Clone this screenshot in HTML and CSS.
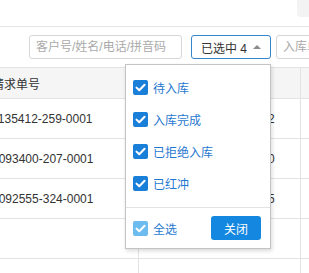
FILE: index.html
```html
<!DOCTYPE html>
<html lang="zh">
<head>
  <meta charset="UTF-8" />
  <title>入库请求</title>
  <link rel="stylesheet" href="styles.css">
</head>
<body>
  <div class="topbar">
    <div class="tab"></div>
  </div>

  <div class="toolbar">
    <input type="text" class="search" placeholder="客户号/姓名/电话/拼音码" />

    <div class="select-wrap">
      <div class="select">
        <span>已选中 4</span>
        <span class="arrow"></span>
      </div>

      <div class="panel">
        <div class="list">
          <label class="option"><span class="box"><svg viewBox="0 0 15 15"><path d="M3.5 7.6 L6.3 10.3 L11.6 4.8" /></svg></span>待入库</label>
          <label class="option"><span class="box"><svg viewBox="0 0 15 15"><path d="M3.5 7.6 L6.3 10.3 L11.6 4.8" /></svg></span>入库完成</label>
          <label class="option"><span class="box"><svg viewBox="0 0 15 15"><path d="M3.5 7.6 L6.3 10.3 L11.6 4.8" /></svg></span>已拒绝入库</label>
          <label class="option"><span class="box"><svg viewBox="0 0 15 15"><path d="M3.5 7.6 L6.3 10.3 L11.6 4.8" /></svg></span>已红冲</label>
        </div>
        <div class="panel-footer">
          <label class="option all"><span class="box"><svg viewBox="0 0 15 15"><path d="M3.5 7.6 L6.3 10.3 L11.6 4.8" /></svg></span>全选</label>
          <button type="button" class="close">关闭</button>
        </div>
      </div>
    </div>

    <input type="text" class="search short" placeholder="入库单号" />
  </div>

  <div class="grid">
    <div class="row head">
      <div class="cell">请求单号</div>
      <div class="cell mid">请求时间</div>
      <div class="cell"></div>
    </div>
    <div class="row">
      <div class="cell">1135412-259-0001</div>
      <div class="cell mid">2023-11-01 13:54:12</div>
      <div class="cell"></div>
    </div>
    <div class="row">
      <div class="cell">1093400-207-0001</div>
      <div class="cell mid">2023-11-01 09:34:00</div>
      <div class="cell"></div>
    </div>
    <div class="row">
      <div class="cell">1092555-324-0001</div>
      <div class="cell mid">2023-11-01 09:25:55</div>
      <div class="cell"></div>
    </div>
    <div class="row">
      <div class="cell"></div>
      <div class="cell"></div>
      <div class="cell"></div>
    </div>
    <div class="row">
      <div class="cell"></div>
      <div class="cell"></div>
      <div class="cell"></div>
    </div>
  </div>
</body>
</html>
```

FILE: styles.css
```css
* {
  margin: 0;
  padding: 0;
  box-sizing: border-box;
  font-family: 'Liberation Sans', 'Noto Sans CJK SC', sans-serif;
}

body {
  width: 309px;
  height: 273px;
  overflow: hidden;
  background-color: white;
  color: #333;
  font-size: 12px;
}

.topbar {
  height: 27px;
  border-bottom: 1px solid #e6e6e6;
  display: flex;
  justify-content: flex-end;
}

.tab {
  width: 12px;
  height: 17px;
  background-color: #f3f3f3;
  border-bottom-left-radius: 4px;
}

.toolbar {
  display: flex;
  align-items: center;
  padding: 8px 0 8px 29px;
}

.search {
  flex-shrink: 0;
  width: 153px;
  height: 24px;
  padding: 0 6px;
  border: 1px solid #d6d6d6;
  border-radius: 3px;
  font-size: 12px;
  color: #333;
}

.search::placeholder {
  color: #aaa;
}

.search.short {
  width: 80px;
  margin-left: 5px;
}

.select-wrap {
  position: relative;
  flex-shrink: 0;
  margin-left: 9px;
}

.select {
  width: 80px;
  height: 24px;
  padding: 0 6px 0 9px;
  border: 1px solid #3585cf;
  border-radius: 3px;
  display: flex;
  align-items: center;
  justify-content: space-between;
}

.arrow {
  width: 0;
  height: 0;
  border-left: 4px solid transparent;
  border-right: 4px solid transparent;
  border-bottom: 4px solid #8c8c8c;
  margin-right: 3px;
}

.panel {
  position: absolute;
  top: 29px;
  right: 0;
  width: 146px;
  background-color: white;
  border: 1px solid #c4c4c4;
  box-shadow: 1px 2px 4px rgba(0, 0, 0, 0.15);
  z-index: 2;
}

.list {
  padding: 6px 0 8px 7px;
}

.option {
  height: 32px;
  display: flex;
  align-items: center;
  gap: 5px;
  color: #1f78d1;
  cursor: pointer;
}

.box {
  width: 15px;
  height: 15px;
  border-radius: 2px;
  background-color: #1a7fd9;
  display: flex;
}

.box svg {
  width: 15px;
  height: 15px;
  fill: none;
  stroke: white;
  stroke-width: 2;
  stroke-linecap: round;
  stroke-linejoin: round;
}

.all .box {
  background-color: #6cbcf0;
}

.panel-footer {
  height: 41px;
  border-top: 1px solid #e3e3e3;
  padding: 0 9px 0 7px;
  display: flex;
  align-items: center;
  justify-content: space-between;
}

.close {
  width: 50px;
  height: 24px;
  border: none;
  border-radius: 3px;
  background-color: #1487e0;
  color: white;
  font-size: 12px;
  cursor: pointer;
}

.grid {
  margin-left: -22px;
  border-top: 1px solid #e3e3e3;
}

.row {
  display: grid;
  grid-template-columns: 161px 162px 100px;
  height: 40px;
  border-bottom: 1px solid #e3e3e3;
}

.row.head {
  height: 31px;
  background-color: #f5f5f5;
}

.cell {
  padding: 0 14px;
  border-right: 1px solid #e3e3e3;
  display: flex;
  align-items: center;
  white-space: nowrap;
  overflow: hidden;
}

.cell.mid {
  justify-content: center;
}
```
